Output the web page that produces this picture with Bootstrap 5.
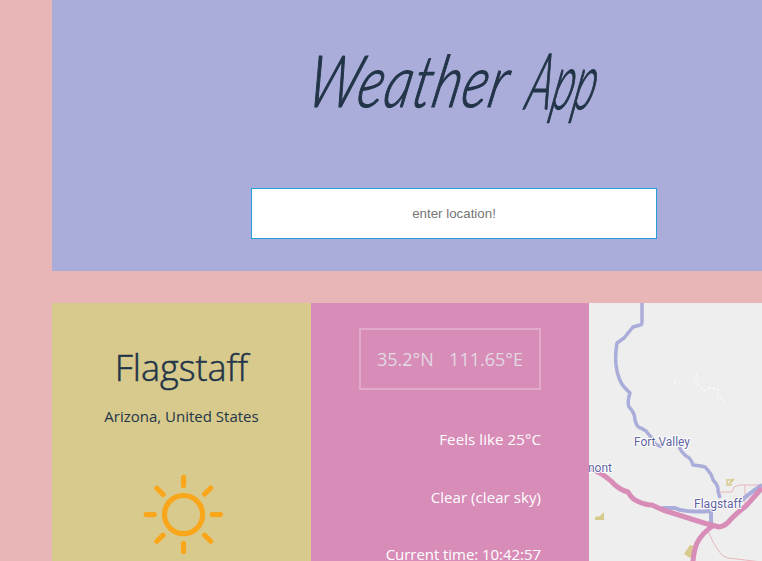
<!DOCTYPE html>
<html lang="en">
<head>
<meta charset="utf-8">
<meta name="viewport" content="width=device-width, initial-scale=1">
<title>Weather App</title>
<link href="https://cdn.jsdelivr.net/npm/bootstrap@5.3.0/dist/css/bootstrap.min.css" rel="stylesheet">
<style>
html,body{height:561px;overflow:hidden}
body{background:#e9b6b7;color:#223548;font-family:"Open Sans","Noto Sans",sans-serif}
.shell{height:561px;margin-left:52px}
.hero{width:804px;height:271px;background:#aaacda}
.brand{font-family:Lato,sans-serif;font-style:italic;font-weight:300;font-size:72px;line-height:80px;height:80px;margin-top:41px;white-space:nowrap;-webkit-text-stroke:1.2px #223548}
.brand span{display:inline-block;transform-origin:0 100%}
.word-a{letter-spacing:1.500px;transform:translate(48px,-2px) skewX(-12deg) scaleX(.76)}
.word-b{transform:translate(-15px,1px) skewX(-12deg) scale(.58,1.08)}
.search{width:406px;height:51px;margin-top:67px;border:1px solid #249fdb;border-radius:0;background:#fff;text-align:center;font:13.33px "Liberation Sans",Arial,sans-serif;outline:0;padding:0}
.search::placeholder{color:#757575;opacity:1}
.place{width:259px;height:258px;background:#d8ca8c}
.city{font-size:36px;font-weight:300;line-height:48px;margin-top:41px;-webkit-text-stroke:.5px #223548}
.region{font-size:15px;line-height:22px;margin-top:13px}
.facts{width:278px;height:258px;background:#d88cb8;color:#fff;font-size:15px;padding:25px 48px 0}
.coords{width:182px;height:62px;border:2px solid #e3a9cc;color:#e2d9e2;font-size:18px}
.fact{line-height:22px;white-space:nowrap}
.f1{margin-top:38px;letter-spacing:.1px}.f2{margin-top:36px;letter-spacing:.07px}.f3{margin-top:35px;letter-spacing:-.05px}
.map{width:267px;height:258px;background:#eee}
</style>
</head>
<body>
<main class="shell overflow-hidden">
<header class="hero d-flex flex-column align-items-center overflow-hidden">
<h1 class="brand mb-0"><span class="word-a">Weather</span> <span class="word-b">App</span></h1>
<input class="search d-block" type="text" placeholder="enter location!" aria-label="Location">
</header>
<section class="d-flex mt-4 pt-2">
<div class="place d-flex flex-column align-items-center flex-shrink-0">
<h2 class="city mb-0">Flagstaff</h2>
<p class="region mb-0">Arizona, United States</p>
<svg width="82" height="82" viewBox="-1.500 -.6 80 80" style="margin-top:46px" fill="none" stroke="#faa61a" stroke-linecap="round" stroke-width="5"><circle cx="40" cy="40" r="18.600"/><path d="M40 3.500v8M40 68v8M3.500 40h8M68 40h8M14 14.300l6 6M60.500 20l6-6M14 66l6-6M60.500 60l6 6"/></svg>
</div>
<div class="facts d-flex flex-column align-items-end flex-shrink-0">
<div class="coords d-flex justify-content-between align-items-center flex-shrink-0 px-3"><span>35.2°N</span><span>111.65°E</span></div>
<div class="fact f1">Feels like 25°C</div>
<div class="fact f2">Clear (clear sky)</div>
<div class="fact f3">Current time: 10:42:57</div>
</div>
<svg class="map flex-shrink-0" viewBox="589 303 267 258" fill="none" stroke-linejoin="round">
<path stroke="#fff" stroke-width="1" stroke-dasharray="3 2" d="M674 384l2-3M697 374l-2 3 2 6 7 8 6-3 8 1-1 6 8 7"/>
<g stroke="#e9b6bb" stroke-width="1"><path d="M720 492h12l2-5 6-2h22M745 485v23M722 508h20M708 531q5 12 10 19q4 7 10 8l34 4"/></g>
<path fill="#d8ca8c" d="M595 517l5-1 4-4v8h-9zM690 545l5 1v5l-5 7-6-4z"/>
<path stroke="#d8ca8c" stroke-width="1.500" d="M727 479v6h5M728 480h4M729 484l5-5M732 482l1-3"/>
<g stroke="#aaacda" stroke-width="4">
<path stroke-width="3.500" d="M642 303v19q0 3-2 3l-7 2-9 11-7 5q-2 12-1 22 2 16 9 23l5 5q-3 9-1 14 6 6 6 13 2 8 6 8l5 3 4 5q4 2 5 8l7 3M679 447q3 6 7 9 5 2 7 9 9 1 12 2 7 7 8 13 6 6 5 11l2 7"/>
<path d="M662 508l13 0q10 5 36 3v16M740 502q7-7 22-17"/></g>
<path stroke="#d88cb8" stroke-width="5" d="M589 468q12 4 22 13 8 9 17 11 4 7 9 9 8 4 15 4l11 5 41 13 15 4q7-1 12-8 7-7 15-13l16-18M714 525q-12 8-17 18-3 7-4 18v20"/>
<g font-family="Roboto,sans-serif" font-size="12" fill="#62649f" stroke="#fff" stroke-width="2" paint-order="stroke"><text x="634" y="445.500" textLength="56" lengthAdjust="spacingAndGlyphs">Fort Valley</text><text x="694" y="507.500" textLength="48" lengthAdjust="spacingAndGlyphs">Flagstaff</text><text x="588" y="472" textLength="24" lengthAdjust="spacingAndGlyphs">nont</text></g>
</svg>
</section>
</main>
<script src="https://cdn.jsdelivr.net/npm/bootstrap@5.3.0/dist/js/bootstrap.bundle.min.js"></script>
</body>
</html>
